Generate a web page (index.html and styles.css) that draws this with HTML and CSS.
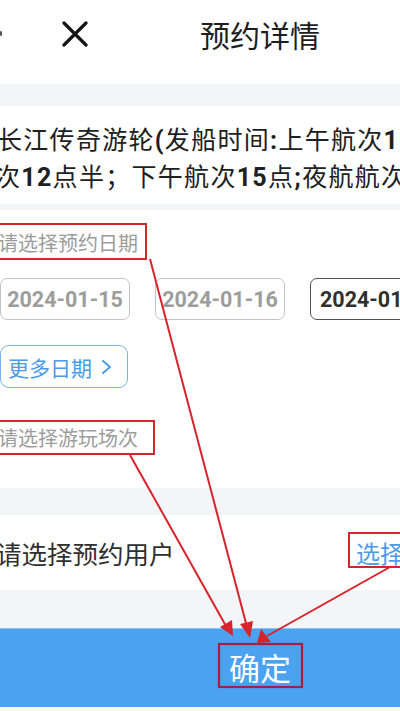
FILE: index.html
```html
<!DOCTYPE html>
<html lang="zh">
<head>
<meta charset="utf-8">
<link rel="stylesheet" href="styles.css">
</head>
<body>
<div class="page">
  <header class="header">
    <span class="back-mark"></span>
    <svg class="close-icon" width="26" height="26" viewBox="0 0 26 26"><path d="M2 2 L24 24 M24 2 L2 24" stroke="#151515" stroke-width="3.2" stroke-linecap="round" fill="none"/></svg>
    <h1 class="title">预约详情</h1>
  </header>

  <section class="card intro">
    <p class="intro-line l1">长江传奇游轮<b>(</b>发船时间<b>:</b>上午航次<b>10</b>点;</p>
    <p class="intro-line l2">次<b>12</b>点半；下午航次<b>15</b>点<b>;</b>夜航航次<b>19</b>点)</p>
  </section>

  <section class="card picker">
    <div class="label">请选择预约日期</div>
    <div class="dates">
      <div class="date">2024-01-15</div>
      <div class="date">2024-01-16</div>
      <div class="date active">2024-01-17</div>
    </div>
    <div class="more">更多日期<svg class="chev" width="12" height="16" viewBox="0 0 12 16"><path d="M2 2 L9 8 L2 14" stroke="#4a9be8" stroke-width="2" fill="none" stroke-linejoin="round" stroke-linecap="round"/></svg></div>
    <div class="label label2">请选择游玩场次</div>
  </section>

  <section class="card user">
    <span class="user-label">请选择预约用户</span>
    <span class="user-pick">选择用户</span>
  </section>

  <div class="confirm">确定</div>
  <div class="footer"></div>

  <svg class="annot" width="400" height="711" viewBox="0 0 400 711">
    <g fill="none" stroke="#d8232a" stroke-width="2">
      <rect x="-4" y="224" width="150" height="35"/>
      <rect x="-4" y="421" width="158" height="33"/>
      <rect x="349" y="533" width="60" height="34"/>
      <line x1="150" y1="259" x2="247" y2="627"/>
      <line x1="130" y1="455" x2="226" y2="626"/>
      <line x1="390" y1="567" x2="267" y2="636"/>
    </g>
    <rect x="219" y="644" width="83" height="43" fill="none" stroke="#a81f3d" stroke-width="2.2"/>
    <g fill="#d8232a">
      <polygon points="250,638 240,624 253,621"/>
      <polygon points="233,636 220,627 232,620"/>
      <polygon points="257,643 261,629 271,642"/>
    </g>
  </svg>
</div>
</body>
</html>
```

FILE: styles.css
```css
* { box-sizing: border-box; }
html, body { margin: 0; padding: 0; }
body {
  width: 400px;
  height: 711px;
  overflow: hidden;
  background: #f4f5f9;
  font-family: Roboto, "Noto Sans CJK SC", sans-serif;
}
.page {
  position: relative;
  width: 400px;
  height: 711px;
  overflow: hidden;
  display: flex;
  flex-direction: column;
}
.header {
  height: 84px;
  background: #fff;
  display: flex;
  align-items: center;
  flex-shrink: 0;
}
.back-mark {
  width: 2px;
  height: 5px;
  background: #555;
  margin-top: -17px;
  border-radius: 1px;
}
.close-icon {
  margin-left: 60px;
  margin-top: -16px;
}
.title {
  margin: -16px 0 0 112px;
  font-size: 30px;
  font-weight: 400;
  color: #1e1e1e;
  font-family: "Noto Sans CJK SC", sans-serif;
}
.card {
  background: #fff;
  flex-shrink: 0;
}
.intro {
  margin-top: 22px;
  height: 98px;
  padding-top: 15px;
  overflow: hidden;
}
.intro-line {
  margin: 0;
  white-space: nowrap;
  font-size: 25px;
  line-height: 34px;
  letter-spacing: 1.3px;
  color: #202020;
  font-family: "Noto Sans CJK SC", sans-serif;
}
.intro-line b {
  font-family: Roboto, sans-serif;
  font-weight: 700;
}
.l1 { margin-left: -3px; }
.l2 { margin-left: -5px; }
.picker {
  margin-top: 6px;
  height: 278px;
  padding-top: 19px;
}
.label {
  font-size: 20px;
  line-height: 28px;
  color: #9c9c9c;
  margin-left: -2px;
  white-space: nowrap;
  font-family: "Noto Sans CJK SC", sans-serif;
}
.dates {
  display: flex;
  gap: 25px;
  margin-top: 21px;
  white-space: nowrap;
}
.date {
  flex: 0 0 130px;
  height: 42px;
  border: 1.5px solid #c4c4c4;
  border-radius: 7px;
  display: flex;
  align-items: center;
  justify-content: center;
  font-size: 21.5px;
  font-weight: 700;
  color: #9d9d9d;
}
.date.active {
  border-color: #505050;
  color: #303030;
  justify-content: flex-start;
  padding-left: 9px;
}
.more {
  margin-top: 25px;
  width: 128px;
  height: 43px;
  border: 1.8px solid #78b3ea;
  border-radius: 9px;
  display: flex;
  align-items: center;
  padding-left: 7px;
  font-size: 21px;
  color: #4a9be8;
  font-family: "Noto Sans CJK SC", sans-serif;
}
.chev { margin-left: 9px; }
.label2 { margin-top: 36px; }
.user {
  margin-top: 27px;
  height: 75px;
  display: flex;
  align-items: center;
  justify-content: space-between;
  white-space: nowrap;
  font-family: "Noto Sans CJK SC", sans-serif;
  font-size: 25.5px;
}
.user-label {
  color: #303030;
  margin-left: -4px;
}
.user-pick {
  color: #4a9be8;
  font-size: 24px;
  margin-right: -52px;
}
.confirm {
  margin-top: 38px;
  height: 79px;
  flex-shrink: 0;
  background: #4aa2f1;
  border-top: 1px solid #8cc4f4;
  color: #fff;
  font-size: 31px;
  font-family: "Noto Sans CJK SC", sans-serif;
  display: flex;
  align-items: center;
  padding-left: 229px;
  padding-bottom: 4px;
}
.footer {
  flex: 1;
  background: #f7f9fc;
}
.annot {
  position: absolute;
  left: 0;
  top: 0;
  pointer-events: none;
}
```
